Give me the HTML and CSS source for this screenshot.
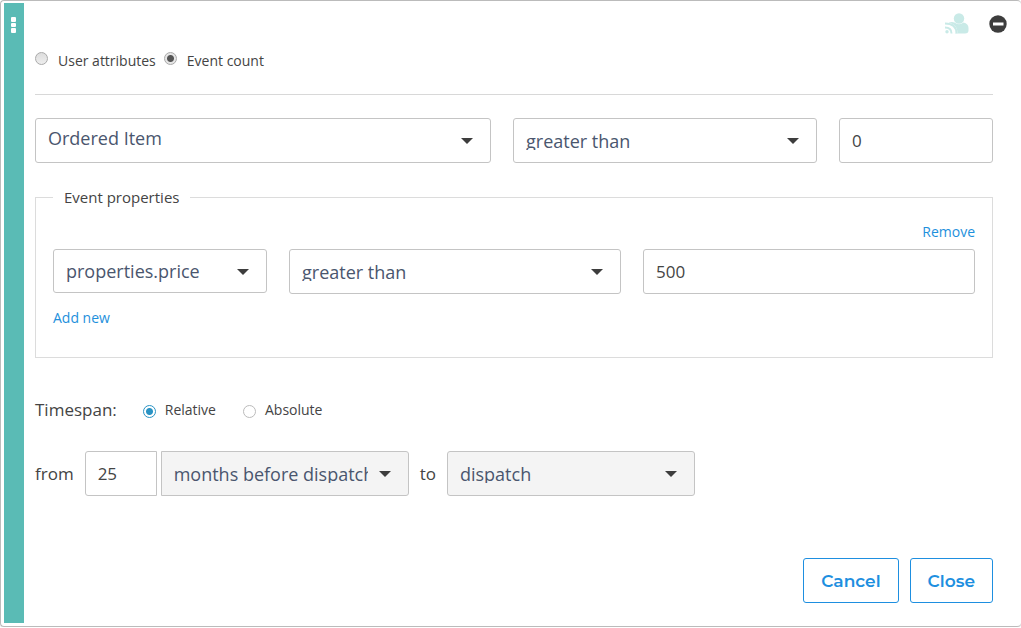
FILE: index.html
```html
<!DOCTYPE html>
<html lang="en">
<head>
<meta charset="utf-8">
<title>Event count condition</title>
<link rel="stylesheet" href="styles.css">
</head>
<body>
<form class="panel">
  <button class="handle" type="button" aria-label="Drag to reorder">
    <svg width="6" height="17" viewBox="0 0 6 17" fill="#fff" aria-hidden="true"><rect width="5" height="5" rx="1"/><rect y="6" width="5" height="4" rx="1"/><rect y="11" width="5" height="5" rx="1"/></svg>
  </button>
  <div class="content">
    <div class="tools">
      <svg class="audience" width="24" height="22" viewBox="0 0 24 22" aria-hidden="true">
        <ellipse cx="14" cy="5.500" rx="5.200" ry="5.300" fill="#c9eae7"/>
        <path d="M4 9.500Q7 8.500 9.500 9.500Q14 13 18.500 9.500Q23.500 10.500 23.500 15V17.500Q23.500 20.500 20 20.500H10Z" fill="#c9eae7"/>
        <path d="M0 9.500Q12.500 9.500 12.500 20.500H0Z" fill="#fff"/>
        <path d="M0 10.500Q11.500 10.500 11.500 20.500M0 14.500Q6.500 14.500 6.500 20.500" fill="none" stroke="#c9eae7" stroke-width="2"/>
        <circle cx="2" cy="18.800" r="1.700" fill="#c9eae7"/>
      </svg>
      <button class="collapse" type="button" aria-label="Remove condition">
        <svg width="18" height="18" viewBox="0 0 18 18" aria-hidden="true"><circle cx="9" cy="9" r="8.700" fill="#3d3d3d"/><rect x="4" y="7.500" width="10.500" height="3" fill="#fff"/></svg>
      </button>
    </div>
    <div class="kinds">
      <label class="kind"><input class="radio radio-grey" type="radio" name="kind"><span>User attributes</span></label>
      <label class="kind"><input class="radio radio-grey" type="radio" name="kind" checked><span>Event count</span></label>
    </div>
    <div class="row row-event">
      <span class="picker"><select class="field picker-high" aria-label="Event"><option>Ordered Item</option></select></span>
      <span class="picker"><select class="field picker-clip" aria-label="Comparison"><option>greater than</option></select></span>
      <input class="field" type="text" value="0" aria-label="Count">
    </div>
    <fieldset class="properties">
      <legend>Event properties</legend>
      <div class="remove"><a href="#">Remove</a></div>
      <div class="row row-property">
        <span class="picker"><select class="field picker-short" aria-label="Property"><option>properties.price</option></select></span>
        <span class="picker"><select class="field picker-clip" aria-label="Property comparison"><option>greater than</option></select></span>
        <input class="field" type="text" value="500" aria-label="Property value">
      </div>
      <div class="add"><a href="#">Add new</a></div>
    </fieldset>
    <div class="timespan">
      <span class="timespan-title">Timespan:</span>
      <label class="span-kind"><input class="radio radio-blue" type="radio" name="span" checked><span>Relative</span></label>
      <label class="span-kind"><input class="radio radio-blue" type="radio" name="span"><span>Absolute</span></label>
    </div>
    <div class="range">
      <label for="from">from</label>
      <div class="amount">
        <input class="field amount-input" id="from" type="text" value="25">
        <span class="picker picker-fixed"><select class="field picker-clip shaded amount-unit" aria-label="Unit"><option>months before dispatch</option></select></span>
      </div>
      <label for="to">to</label>
      <span class="picker picker-fixed"><select class="field picker-clip shaded" id="to"><option>dispatch</option></select></span>
    </div>
    <div class="actions">
      <button class="action" type="button">Cancel</button>
      <button class="action" type="button">Close</button>
    </div>
  </div>
</form>
</body>
</html>
```
FILE: styles.css
```css
* { box-sizing: border-box; }
body {
  margin: 0;
  background: #fff;
  color: #444;
  font: 14px/20px "Open Sans", sans-serif;
}
.panel {
  display: flex;
  padding: 2px 4px 3px 3px;
  border: 1px solid #bbb;
  border-right: 0;
  border-radius: 4px;
  box-shadow: 0 1px 0 #e4e4e4;
}
.handle {
  flex: none;
  display: flex;
  justify-content: center;
  width: 20px;
  padding: 14px 0 0;
  border: 0;
  background: #5abbb5;
}
.content {
  flex: 1;
  min-width: 0;
  padding: 9px 24px 20px 11px;
}
.tools {
  display: flex;
  justify-content: flex-end;
  align-items: center;
  gap: 20px;
  height: 24px;
  margin-right: -14px;
}
.collapse { display: flex; padding: 0; border: 0; background: none; }
.kinds {
  display: flex;
  gap: 8px;
  padding: 15px 0 23px;
  border-bottom: 1px solid #d8d8d8;
}
.kind { display: flex; gap: 10px; }
.radio {
  appearance: none;
  flex: none;
  width: 13px;
  height: 13px;
  margin: 1px 0 0;
  border-radius: 50%;
}
.radio-grey {
  border: 1px solid #aaa;
  background: linear-gradient(#ddd, #eee);
}
.radio-grey:checked { background: radial-gradient(circle, #555 3px, #e6e6e6 4px); }
.radio-blue { border: 1px solid #bbb; }
.radio-blue:checked {
  border-color: #2a93c4;
  background: radial-gradient(circle, #2a93c4 3px, #fff 4px);
}
.row { display: grid; }
.row-event {
  grid-template-columns: 456fr 304fr 154fr;
  gap: 22px;
  margin-top: 23px;
}
.row-property {
  grid-template-columns: 214fr 332fr 332fr;
  gap: 22px;
  align-items: start;
}
.field {
  display: block;
  width: 100%;
  min-width: 0;
  height: 45px;
  margin: 0;
  padding: 0 12px;
  border: 1px solid #c4c4c4;
  border-radius: 3px;
  background: #fff;
  color: #444;
  font: 17px/24px "Open Sans", sans-serif;
}
.picker { position: relative; display: block; min-width: 0; }
.picker::after {
  content: "";
  position: absolute;
  top: 20px;
  right: 18px;
  border: 6px solid transparent;
  border-top-color: #3d3d3d;
  border-bottom: 0;
  pointer-events: none;
}
.picker select {
  appearance: none;
  padding-right: 40px;
  color: #4a566e;
  font-size: 18px;
}
.picker .picker-high { padding-bottom: 5px; }
.picker .picker-short { height: 44px; }
.picker .picker-clip { padding-top: 13px; padding-bottom: 12px; line-height: 18px; }
.picker .shaded { background: #f4f4f4; }
.properties {
  min-width: 0;
  margin: 24px 0 0;
  padding: 0 17px 29px;
  border: 1px solid #dcdcdc;
}
.properties legend {
  padding: 0 11px;
  font-size: 15px;
  line-height: 21px;
}
a { color: #1e90dc; text-decoration: none; }
.remove { margin-top: 14px; padding-bottom: 7px; text-align: right; }
.add { margin-top: 14px; }
.timespan {
  display: flex;
  align-items: center;
  margin-top: 41px;
}
.timespan-title { margin-right: 26px; font-size: 17px; line-height: 22px; }
.span-kind { display: flex; gap: 9px; margin-right: 27px; }
.span-kind .radio { margin-top: 5px; }
.range {
  display: flex;
  align-items: center;
  gap: 11px;
  margin-top: 30px;
  font-size: 17px;
}
.amount { display: flex; gap: 4px; }
.amount-input { width: 72px; border-radius: 3px 0 0 3px; }
.amount-unit { border-radius: 0 3px 3px 0; }
.picker-fixed { width: 248px; }
.actions {
  display: flex;
  justify-content: flex-end;
  gap: 11px;
  margin-top: 62px;
}
.action {
  height: 45px;
  padding: 0 17px;
  border: 1px solid #1e8fe0;
  border-radius: 3px;
  background: #fff;
  color: #1e8fe0;
  font: 600 17px/24px Montserrat, Inter, sans-serif;
}
```
